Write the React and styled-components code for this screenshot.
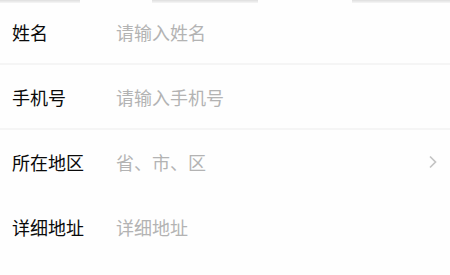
import React from 'react';
import styled, { createGlobalStyle } from 'styled-components';

const GlobalStyle = createGlobalStyle`
    body {
        margin: 0;
        background: #fefefe;
        font-family: "Noto Sans CJK SC", "Noto Sans", sans-serif;
    }
`;

// Тени от верхних вкладок
const TopShadows = styled.div`
    display: flex;
    height: 3px;
`;

const ShadowPiece = styled.div`
    width: ${props => props.w}px;
    background: ${props => props.on ? 'linear-gradient(#dedede, #f6f6f6)' : 'transparent'};
`;

const Form = styled.div`
    width: 450px;
    margin-top: -3px;
`;

const Row = styled.div`
    display: flex;
    align-items: ${props => props.top ? 'flex-start' : 'center'};
    height: ${props => props.h || 64}px;
    box-sizing: border-box;
    padding: ${props => props.top ? '21px 12px 0 12px' : '0 12px'};
    border-bottom: ${props => props.line ? '2px solid #f5f5f5' : 'none'};
`;

const Label = styled.div`
    width: 104px;
    flex-shrink: 0;
    font-size: 18px;
    color: #0a0a0a;
    line-height: 24px;
`;

const Field = styled.div`
    flex: 1;
    font-size: 18px;
    line-height: 24px;
    color: #b3b3b3;
`;

const Chevron = styled.svg`
    width: 10px;
    height: 16px;
    margin-right: 1px;
`;

const rows = [
    { label: '姓名', hint: '请输入姓名', line: true },
    { label: '手机号', hint: '请输入手机号', line: true },
    { label: '所在地区', hint: '省、市、区', arrow: true },
];

export default function App() {
    return (
        <>
            <GlobalStyle />
            <TopShadows>
                <ShadowPiece w={80} on />
                <ShadowPiece w={72} />
                <ShadowPiece w={106} on />
                <ShadowPiece w={94} />
                <ShadowPiece w={98} on />
            </TopShadows>
            <Form>
                {rows.map(r => (
                    <Row key={r.label} line={r.line} h={r.line ? 65 : 64}>
                        <Label>{r.label}</Label>
                        <Field>{r.hint}</Field>
                        {r.arrow && (
                            <Chevron viewBox="0 0 10 16">
                                <path d="M3 2.5 L8.5 8 L3 13.5" fill="none" stroke="#c4c4c4" strokeWidth="1.7" />
                            </Chevron>
                        )}
                    </Row>
                ))}
                <Row top h={80}>
                    <Label>详细地址</Label>
                    <Field>详细地址</Field>
                </Row>
            </Form>
        </>
    );
}
